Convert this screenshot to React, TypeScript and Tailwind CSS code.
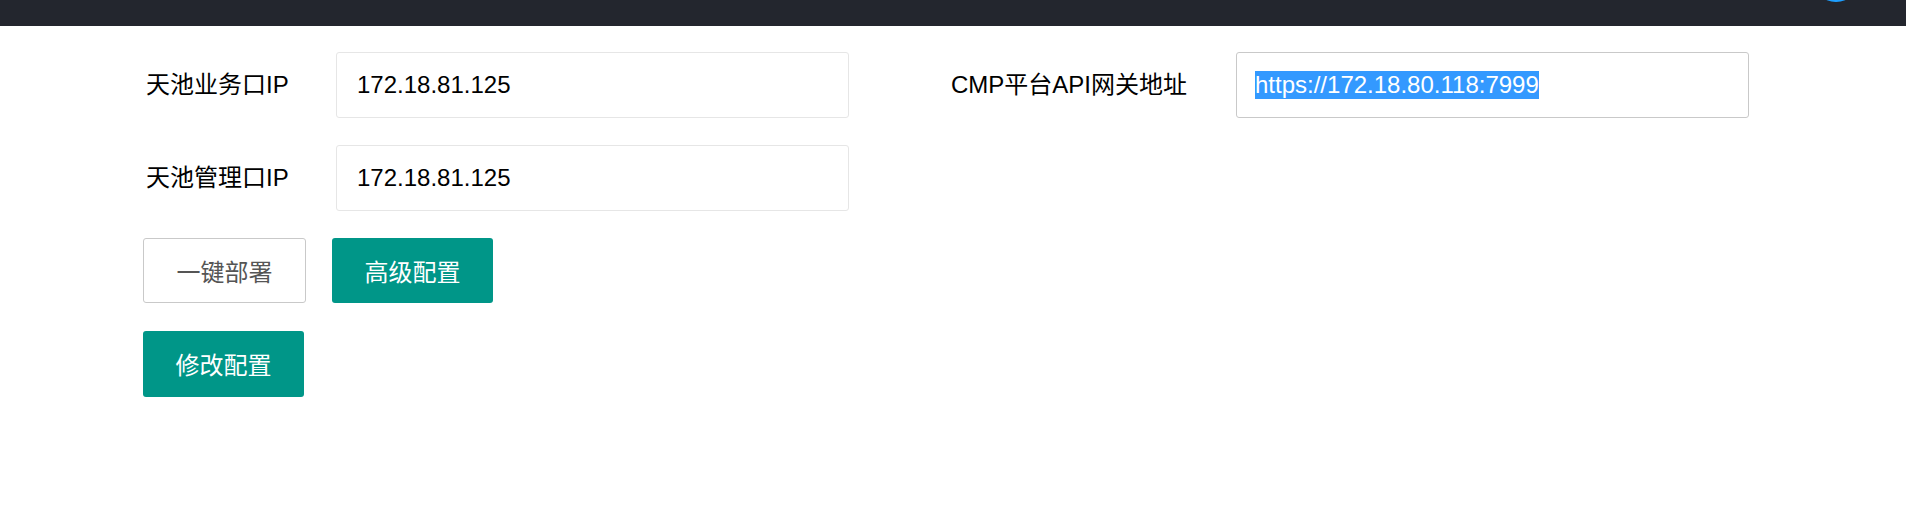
import React from "react";

const labelFont = { fontFamily: '"Liberation Sans", "Noto Sans CJK SC", sans-serif' };

export default function App() {
  return (
    <div className="w-[1906px] h-[518px] bg-white overflow-hidden" style={labelFont}>
      <div className="h-[26px] bg-[#23262e] flex justify-end pr-[60px]">
        <svg width="20" height="26" viewBox="0 0 20 26" className="block">
          <circle cx="10" cy="-21.5" r="23.5" fill="#1e9fff" />
        </svg>
      </div>
      <div className="pl-[143px] pt-[26px] flex flex-col">
        <div className="flex items-center h-[66px]">
          <div className="w-[193px] pl-[3px] text-[24px] text-black leading-[28px]">天池业务口IP</div>
          <div className="w-[513px] h-[66px] border border-[#e6e6e6] rounded-[3px] flex items-center pl-[20px] text-[24px] text-black">
            172.18.81.125
          </div>
          <div className="ml-[102px] w-[285px] text-[24px] text-black leading-[28px]">CMP平台API网关地址</div>
          <div className="w-[513px] h-[66px] border border-[#c9c9c9] rounded-[3px] flex items-center pl-[18px] text-[24px]">
            <span className="bg-[#3399ff] text-white leading-[28px]">https://172.18.80.118:7999</span>
          </div>
        </div>
        <div className="flex items-center h-[66px] mt-[27px]">
          <div className="w-[193px] pl-[3px] text-[24px] text-black leading-[28px]">天池管理口IP</div>
          <div className="w-[513px] h-[66px] border border-[#e6e6e6] rounded-[3px] flex items-center pl-[20px] text-[24px] text-black">
            172.18.81.125
          </div>
        </div>
        <div className="flex mt-[27px] gap-[26px]" style={{ fontFamily: '"Noto Sans CJK SC", sans-serif' }}>
          <button className="w-[163px] h-[65px] border border-[#c9c9c9] rounded-[3px] bg-white text-[#555] text-[24px] flex items-center justify-center">
            一键部署
          </button>
          <button className="w-[161px] h-[65px] rounded-[3px] bg-[#009688] text-white text-[24px] flex items-center justify-center">
            高级配置
          </button>
        </div>
        <div className="flex mt-[28px]" style={{ fontFamily: '"Noto Sans CJK SC", sans-serif' }}>
          <button className="w-[161px] h-[66px] rounded-[3px] bg-[#009688] text-white text-[24px] flex items-center justify-center">
            修改配置
          </button>
        </div>
      </div>
    </div>
  );
}
